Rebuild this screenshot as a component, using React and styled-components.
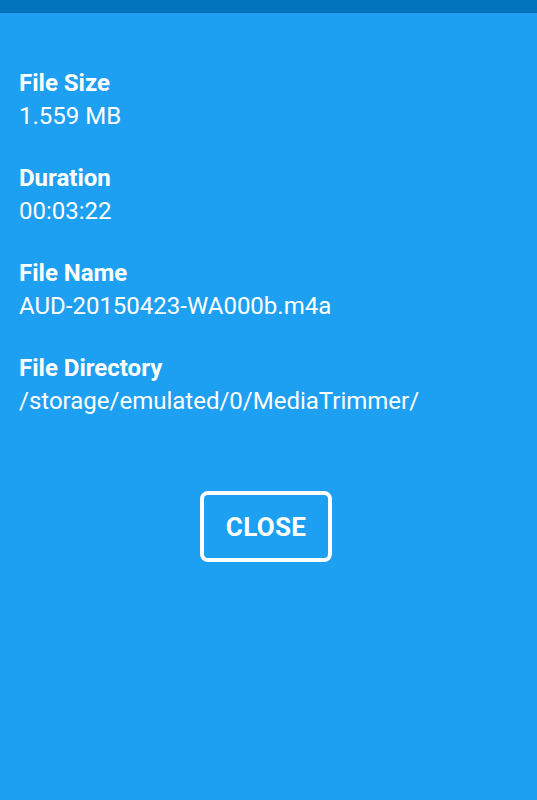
import React from "react";
import styled, { createGlobalStyle } from "styled-components";

const GlobalStyle = createGlobalStyle`
  html, body {
    margin: 0;
    padding: 0;
    background: #1ea0f2;
  }
  body {
    font-family: Roboto, "Noto Sans", sans-serif;
  }
`;

const Screen = styled.div`
  width: 537px;
  height: 800px;
  background: #1ea0f2;
  display: flex;
  flex-direction: column;
`;

const StatusBar = styled.div`
  height: 12px;
  background: #0274be;
  border-bottom: 1px solid #066aab;
`;

const Details = styled.div`
  padding: 55px 19px 0;
  display: flex;
  flex-direction: column;
  gap: 32px;
`;

const Field = styled.div`
  display: flex;
  flex-direction: column;
`;

const Label = styled.div`
  color: #fff;
  font-weight: 700;
  font-size: 24px;
  line-height: 30px;
`;

const Value = styled.div`
  color: #fff;
  font-size: 24px;
  line-height: 30px;
  margin-top: 3px;
`;

const Actions = styled.div`
  display: flex;
  justify-content: center;
  margin-top: 75px;
  padding-right: 5px;
`;

const CloseButton = styled.button`
  width: 132px;
  height: 71px;
  border: 4px solid #fff;
  border-radius: 8px;
  background: transparent;
  color: #fff;
  font-family: Roboto, sans-serif;
  font-weight: 700;
  font-size: 26px;
  letter-spacing: 0.3px;
  padding: 0;
  cursor: pointer;
`;

const fields = [
  { label: "File Size", value: "1.559 MB" },
  { label: "Duration", value: "00:03:22" },
  { label: "File Name", value: "AUD-20150423-WA000b.m4a" },
  { label: "File Directory", value: "/storage/emulated/0/MediaTrimmer/" },
];

export default function App() {
  return (
    <Screen>
      <GlobalStyle />
      <StatusBar />
      <Details>
        {fields.map((f) => (
          <Field key={f.label}>
            <Label>{f.label}</Label>
            <Value>{f.value}</Value>
          </Field>
        ))}
      </Details>
      <Actions>
        <CloseButton>CLOSE</CloseButton>
      </Actions>
    </Screen>
  );
}
